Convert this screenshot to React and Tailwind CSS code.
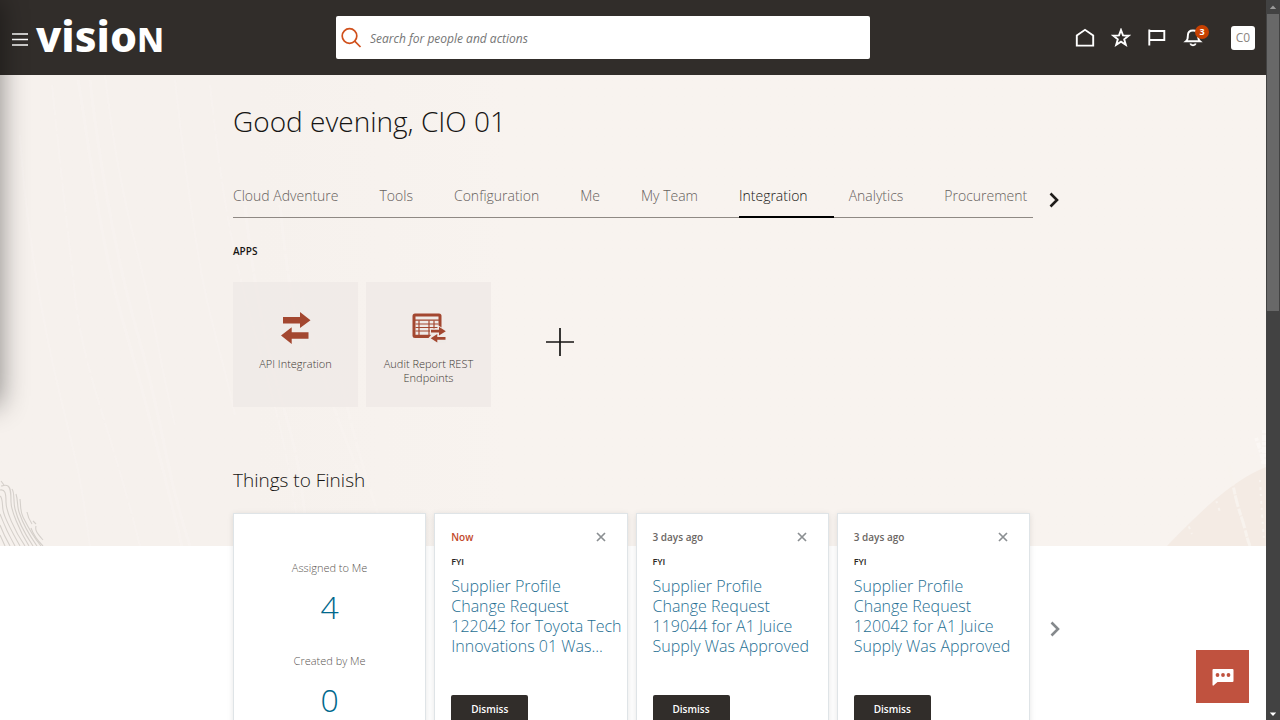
import React from "react";

const tabs = ["Cloud Adventure", "Tools", "Configuration", "Me", "My Team", "Integration", "Analytics", "Procurement"];

const notices = [
  { id: 1, when: "Now", fresh: true, title: "Supplier Profile\nChange Request\n122042 for Toyota Tech\nInnovations 01 Was..." },
  { id: 2, when: "3 days ago", fresh: false, title: "Supplier Profile\nChange Request\n119044 for A1 Juice\nSupply Was Approved" },
  { id: 3, when: "3 days ago", fresh: false, title: "Supplier Profile\nChange Request\n120042 for A1 Juice\nSupply Was Approved" },
];

function IconButton({ label, children }) {
  return (
    <button type="button" aria-label={label} className="relative flex h-6 w-6 items-center justify-center">
      {children}
    </button>
  );
}

function Header() {
  return (
    <header className="flex h-[75px] shrink-0 items-center bg-[#312d2a] text-white">
      <div className="flex w-[336px] shrink-0 items-center gap-2 pl-3">
        <button type="button" aria-label="Navigator" className="mt-1">
          <svg width="16" height="13" viewBox="0 0 16 13" fill="none" stroke="#fff" strokeWidth="1.3">
            <path d="M0 1h16M0 6.5h16M0 12h16" />
          </svg>
        </button>
        <a href="#home" aria-label="Vision home" className="flex items-baseline font-['Noto_Sans','Open_Sans',sans-serif] text-[43px] leading-[60px] font-extrabold">
          visio<span className="text-[33px]">N</span>
        </a>
      </div>
      <form role="search" className="flex h-[43px] max-w-[534px] flex-1 items-center rounded-[2px] bg-white">
        <svg className="ml-1 shrink-0" width="22" height="22" viewBox="0 0 22 22" fill="none" stroke="#d0501c" strokeWidth="1.7">
          <circle cx="9.5" cy="9" r="7.3" />
          <path d="M14.7 14.2 20.500 20" />
        </svg>
        <input
          type="text"
          aria-label="Search for people and actions"
          placeholder="Search for people and actions"
          className="ml-2 h-full flex-1 bg-transparent pt-[2px] text-[12px] text-black italic outline-none placeholder:text-[#757575]"
        />
      </form>
      <nav aria-label="Global" className="ml-auto flex items-center gap-3 pr-[11px]">
        <IconButton label="Home">
          <svg width="20" height="20" viewBox="0 0 20 20" fill="none" stroke="#fff" strokeWidth="1.900">
            <path d="M1.8 17.600V7.400L10 1.800l8.200 5.600v10.200z" />
          </svg>
        </IconButton>
        <IconButton label="Favorites">
          <svg width="20" height="20" viewBox="0 0 20 20" fill="none" stroke="#fff" strokeWidth="1.900">
            <path d="M10 2l2 5.400 5.700.300-4.500 3.600 1.600 5.500L10 13.700l-4.800 3.100 1.600-5.500-4.500-3.600L8 7.400z" />
          </svg>
        </IconButton>
        <IconButton label="Watchlist">
          <svg width="20" height="20" viewBox="0 0 20 20" fill="none" stroke="#fff" strokeWidth="1.900">
            <path d="M2.300 1.500v16M2.300 3h15v9h-15" />
          </svg>
        </IconButton>
        <IconButton label="Notifications, 3 new">
          <svg width="20" height="20" viewBox="0 0 20 20" fill="none" stroke="#fff" strokeWidth="1.900">
            <path d="M3 13.300c1.500-1.200 1.900-2.500 1.900-6 0-3 2.100-4.800 5.100-4.800s5.100 1.800 5.100 4.800c0 3.500.400 4.800 1.900 6z" />
            <path d="M7.300 15.500c.500 1.400 1.400 1.800 2.700 1.800s2.200-.400 2.700-1.800" />
          </svg>
          <span className="absolute -top-px -right-1 flex h-[14px] w-[14px] items-center justify-center rounded-full bg-[#c74000] text-[9px] leading-none font-bold">3</span>
        </IconButton>
        <button type="button" aria-label="Account" className="ml-[14px] flex h-6 w-6 items-center justify-center rounded-[3px] bg-white text-[12px] text-[#8b8580]">
          C0
        </button>
      </nav>
    </header>
  );
}

function Backdrop() {
  return (
    <div className="absolute inset-x-0 top-0 h-[471px] overflow-hidden bg-gradient-to-r from-[#f6f1ed] from-20% to-[#f8f3ef] to-40%" aria-hidden="true">
      <svg className="absolute top-0 left-0" width="440" height="471" viewBox="0 0 440 471" fill="none" stroke="#f9f4f0" strokeOpacity=".6">
        <path strokeWidth="3" d="M78 5C88 60 98 160 124 250S162 390 182 471M90 5C96 60 112 170 138 260S164 390 190 471" />
        <path strokeWidth="2" d="M20 60C24 130 38 230 60 320S80 400 90 471M105 0C112 60 120 110 138 180S160 290 175 350M175 5C182 70 190 130 200 190S225 290 235 340" />
        <path strokeWidth="2" d="M52 10C60 90 66 140 75 220S110 350 140 471M210 10C218 80 225 150 250 240S290 380 300 471" strokeDasharray="30 4 12 3" />
        <path strokeWidth="3" d="M245 130C250 180 262 260 280 320S300 400 305 440M300 210C310 260 330 330 360 400M340 300C350 350 365 400 385 460M280 130C285 180 290 220 305 290" strokeDasharray="46 3 18 2" />
      </svg>
      <svg className="absolute bottom-0 left-0" width="50" height="68" viewBox="0 0 50 68" fill="none" stroke="#d5d0cb" strokeWidth="1.100">
        <path d="M1 8c3 0 4-2 7 0s3 8 3 16 8 28 18 44" />
        <path d="M0 12c5-1 6 3 6 12s8 28 19 44" />
        <path d="M0 18c3 2 2 8 3 14s9 22 17 36" />
        <path d="M0 36c3 8 8 20 15 32M0 47c3 8 6 14 10 21M0 57l5 11" />
        <path d="M12 11c3 4 1 12 3 20s8 22 18 37" />
        <path d="M16 16c2 6 1 12 3 18s8 20 18 34" />
        <path d="M20 21c1 8 0 12 3 18s8 17 18 29" />
        <path d="M27 34c1 6 3 9 5 12M36 48c-1 4 0 6 7 14M31 50c2 6 6 12 12 18M1 3l3 4M33 43l3 3" />
      </svg>
      <svg className="absolute right-0 bottom-0" width="110" height="130" viewBox="0 0 110 130" fill="none">
        <path fill="#f4ebe4" d="M11 130C42 98 76 64 110 51v79z" />
        <path stroke="#f8f3ee" strokeWidth="3" strokeDasharray="7 1 12 2" d="M73 50c4 18 6 32 12 50s5 20 9 30" />
        <path stroke="#fbf8f5" strokeWidth="4" strokeDasharray="3 2 6 1" strokeOpacity=".8" d="M100 22c4 10 6 18 8 28M108 14v34" />
        <path stroke="#f8f3ee" strokeWidth="2" strokeDasharray="2 5 3 4" d="M56 72l8 24M104 64c1 20 2 34 4 60M88 42l14-4M30 104l6 14" />
      </svg>
    </div>
  );
}

function Chevron({ className }) {
  return (
    <svg className={className} width="10" height="16" viewBox="0 0 10 16" fill="none" stroke="currentColor" strokeWidth="2.600">
      <path d="M1.500 1.500 8 8l-6.500 6.500" />
    </svg>
  );
}

function SwapIcon() {
  return (
    <svg width="30" height="32" viewBox="0 0 30 32" fill="#a34730">
      <path d="M2 5h17V0l10.500 8.200L19 16v-4.600H2zM27.500 20.200H10.700v-5L0 23.500 10.700 32v-5.200h16.800z" />
    </svg>
  );
}

function ReportIcon() {
  return (
    <svg width="34" height="30" viewBox="0 0 34 30">
      <rect x="0.500" y="0.500" width="29" height="24.500" rx="2.500" fill="#a34730" />
      <path fill="#efeae7" d="M3.500 3.500h23v3h-23zM3.500 7.800h23v14h-23z" />
      <path fill="none" stroke="#a34730" strokeWidth="1.200" d="M3.500 11h23M3.500 14.500h23M3.500 18h23M7 7.500v14.500M17 7.500v14.500M22 7.500v14.500" />
      <path fill="#efeae7" d="M18 15.500h7.500v-3.500L34 17v13H20l-3.500-5 3-3.500H18z" />
      <path fill="#a34730" d="M19 16.800h8v-3l6.800 4.400-6.800 4.300v-2.900h-8zM33.500 23.900h-8.200V21l-6.600 4.200 6.600 4.200v-2.700h8.200z" />
    </svg>
  );
}

function AppTile({ icon, label }) {
  return (
    <a href="#app" className="flex h-[125px] w-[125px] flex-col items-center bg-[#efeae7]/90 px-3 pt-[30px]">
      <span className="flex h-8 items-center">{icon}</span>
      <span className="mt-[13px] text-center text-[11px] leading-[14px] font-light text-[#3d3834]">{label}</span>
    </a>
  );
}

function Card({ children, className }) {
  return <li className={`h-[290px] border border-[#dfe4e7] bg-white shadow-[0_1px_6px_rgba(0,0,0,0.1)] ${className}`}>{children}</li>;
}

function Notice({ when, fresh, title }) {
  return (
    <Card className="px-4 pt-[15px]">
      <div className="flex h-4 items-center justify-between pr-[5px]">
        <span className={`text-[10px] font-semibold ${fresh ? "text-[#c2492a]" : "text-[#6b6663]"}`}>{when}</span>
        <button type="button" aria-label="Close">
          <svg width="10" height="10" viewBox="0 0 10 10" fill="none" stroke="#8b8f92" strokeWidth="1.700">
            <path d="M1 1l8 8M9 1 1 9" />
          </svg>
        </button>
      </div>
      <p className="mt-[9px] text-[9px] leading-4 font-semibold text-[#2b2724]">FYI</p>
      <h3 className="mt-[6px] -mr-3 h-20 text-[16px] leading-5 font-light whitespace-pre-line text-[#1f6f93]">
        <a href="#notice">{title}</a>
      </h3>
      <button type="button" className="mt-[39px] flex h-7 w-[77px] items-center justify-center rounded-[2px] bg-[#312d2a] text-[10px] font-semibold text-white">
        Dismiss
      </button>
    </Card>
  );
}

function Scrollbar() {
  return (
    <div className="flex w-[14px] shrink-0 flex-col items-center bg-[#424242]" aria-hidden="true">
      <svg width="14" height="14" viewBox="0 0 14 14" fill="#9a9a9a">
        <path d="M7 5.500l3.200 3.500H3.800z" />
      </svg>
      <div className="h-[297px] w-3 bg-[#686868]" />
      <svg className="mt-auto" width="14" height="14" viewBox="0 0 14 14" fill="#fff">
        <path d="M7 10l3.200-3.600H3.800z" />
      </svg>
    </div>
  );
}

export default function App() {
  return (
    <div className="flex h-screen overflow-hidden bg-white font-['Open_Sans','Noto_Sans',sans-serif]">
      <div className="relative flex min-w-0 flex-1 flex-col overflow-hidden">
        <Header />
        <main className="relative flex-1">
          <Backdrop />
          <div className="relative mx-auto w-full max-w-[800px]">
            <h1 className="pt-[22px] text-[28px] leading-[48px] font-light text-[#161513]">Good evening, CIO 01</h1>
            <div className="relative mt-[34px]">
              <div role="tablist" className="flex gap-[15px] border-b border-[#8f8984]">
                {tabs.map((tab) => (
                  <button
                    key={tab}
                    type="button"
                    role="tab"
                    aria-selected={tab === "Integration"}
                    className={`-mb-px h-[39px] border-b-2 pb-1 text-[14px] font-light whitespace-nowrap ${
                      tab === "Integration" ? "border-black pr-[26px] text-[#161513]" : tab === "Procurement" ? "border-transparent text-[#66615d]" : "border-transparent pr-[26px] text-[#66615d]"
                    }`}
                  >
                    {tab}
                  </button>
                ))}
              </div>
              <button type="button" aria-label="More tabs" className="absolute top-[13px] left-full ml-4 text-[#1f1c1a]">
                <Chevron />
              </button>
            </div>
            <h2 className="mt-[25px] text-[10px] leading-4 font-semibold text-[#161513]">APPS</h2>
            <div className="mt-[23px] flex items-center gap-2">
              <AppTile icon={<SwapIcon />} label="API Integration" />
              <AppTile icon={<ReportIcon />} label="Audit Report REST Endpoints" />
              <button type="button" aria-label="Add app" className="ml-[47px] pb-[5px]">
                <svg width="28" height="28" viewBox="0 0 28 28" stroke="#161513" strokeWidth="1.700">
                  <path d="M14 0v28M0 14h28" />
                </svg>
              </button>
            </div>
            <h2 className="mt-[57px] text-[19px] leading-8 font-light text-[#161513]">Things to Finish</h2>
            <div className="relative mt-[17px]">
              <ul className="mr-[3px] grid grid-cols-4 gap-2">
                <Card className="flex flex-col items-center pt-[44px]">
                  <span className="text-[11px] leading-5 font-light text-[#5b5652]">Assigned to Me</span>
                  <a href="#assigned" className="mt-2 text-[32px] leading-[42px] font-light text-[#00688c]">4</a>
                  <span className="mt-[23px] text-[11px] leading-5 font-light text-[#5b5652]">Created by Me</span>
                  <a href="#created" className="mt-2 text-[32px] leading-[42px] font-light text-[#00688c]">0</a>
                </Card>
                {notices.map((n) => (
                  <Notice key={n.id} {...n} />
                ))}
              </ul>
              <button type="button" aria-label="Next items" className="absolute top-[108px] left-full ml-[17px] text-[#85898c]">
                <Chevron />
              </button>
            </div>
          </div>
        </main>
        <div className="pointer-events-none absolute top-0 -left-10 h-[405px] w-10 shadow-[0_0_28px_rgba(0,0,0,0.45)]" />
        <button type="button" aria-label="Open chat" className="absolute right-[17px] bottom-[17px] flex h-[53px] w-[53px] items-center justify-center bg-[#c0523f]">
          <svg width="22" height="18" viewBox="0 0 22 18">
            <path fill="#fff" d="M1.500 1h19a1 1 0 0 1 1 1v11a1 1 0 0 1-1 1H5.500L1.500 17.500a.6.600 0 0 1-1-.500V2a1 1 0 0 1 1-1z" />
            <circle cx="5.500" cy="7" r="1.900" fill="#c0523f" />
            <circle cx="11" cy="7" r="1.900" fill="#c0523f" />
            <circle cx="16.500" cy="7" r="1.900" fill="#c0523f" />
          </svg>
        </button>
      </div>
      <Scrollbar />
    </div>
  );
}
